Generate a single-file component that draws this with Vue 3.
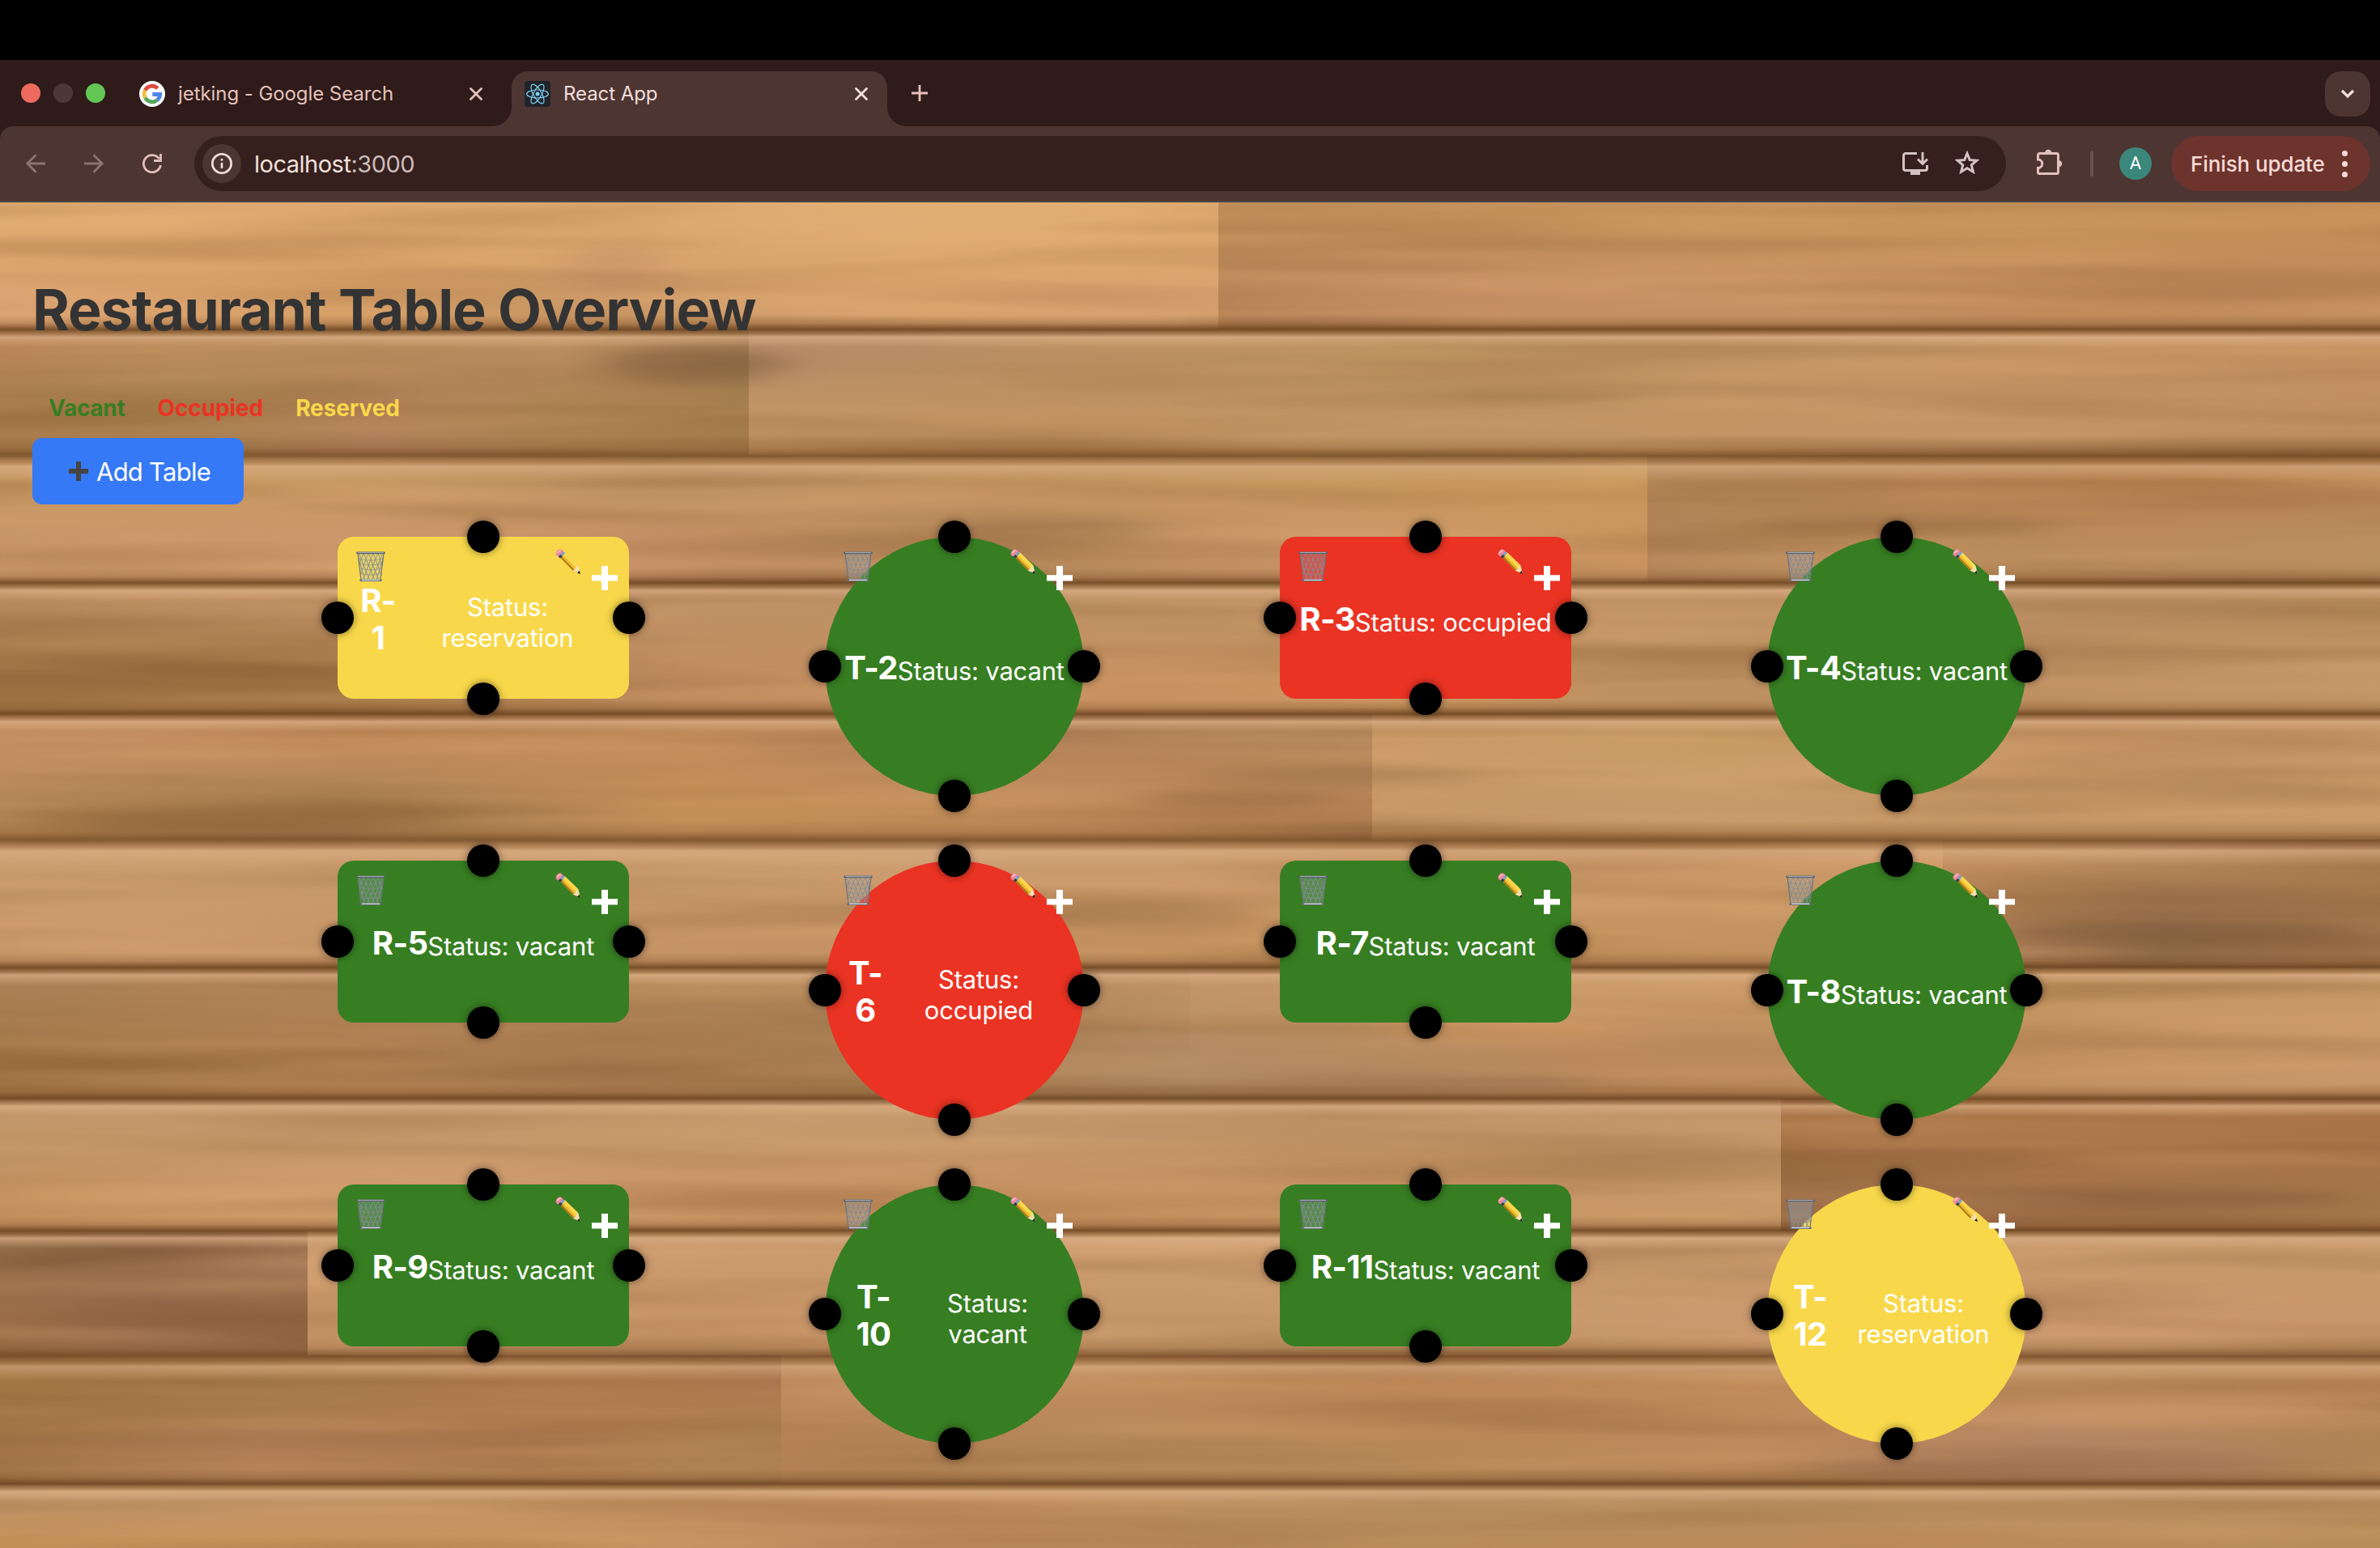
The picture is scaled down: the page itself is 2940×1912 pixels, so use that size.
<script setup>
const tables = [
  { name: 'R-1', status: 'reservation', shape: 'rect', split: [60, 260] },
  { name: 'T-2', status: 'vacant', shape: 'round' },
  { name: 'R-3', status: 'occupied', shape: 'rect' },
  { name: 'T-4', status: 'vacant', shape: 'round' },
  { name: 'R-5', status: 'vacant', shape: 'rect' },
  { name: 'T-6', status: 'occupied', shape: 'round', split: [60, 220] },
  { name: 'R-7', status: 'vacant', shape: 'rect' },
  { name: 'T-8', status: 'vacant', shape: 'round' },
  { name: 'R-9', status: 'vacant', shape: 'rect' },
  { name: 'T-10', status: 'vacant', shape: 'round', split: [82, 200] },
  { name: 'R-11', status: 'vacant', shape: 'rect' },
  { name: 'T-12', status: 'reservation', shape: 'round', split: [66, 214] }
]

// Deck boards: top and bottom edge, then runs of [x, width, colours along the upper half, colours along the lower half]
const boards = [
  { y: 250, b: 407, runs: [[0, 1505, ['#deab70', '#e0ab73', '#dba970', '#e0ae74', '#deaa70'], ['#dca473', '#d8a068', '#cf9c69', '#d6a06c', '#d8a270']], [1505, 1435, ['#c08f5a', '#c9965f', '#c9965f', '#c6935c', '#c28d58'], ['#ba865a', '#c48f63', '#c59161', '#c18b5a', '#bf8a5a']]] },
  { y: 407, b: 562, runs: [[0, 925, ['#b88659', '#bb8b5a', '#b6875a', '#b98b60', '#9b784e'], ['#a97c4c', '#a98050', '#b2805a', '#a98150', '#a98150']], [925, 2015, ['#b58c68', '#bb8e62', '#b9905c', '#c89a68', '#c99865', '#c99665'], ['#c69766', '#c29260', '#c09463', '#c59463', '#c49465', '#bc8c5e']]] },
  { y: 562, b: 720, runs: [[0, 2035, ['#c79862', '#c99a63', '#b88c5c', '#c39360', '#c89960', '#c9995e'], ['#ca986a', '#cb986b', '#c69168', '#b28558', '#c89365', '#c8945f']], [2035, 905, ['#b08456', '#b88555', '#bd8654', '#bb8756'], ['#b3835a', '#b78a59', '#bc8c5f', '#b78c5c']]] },
  { y: 720, b: 882, runs: [[0, 2940, ['#b98a5e', '#bd8e62', '#c19266', '#bd9264', '#c49566', '#c09163', '#b88d62', '#b88c5d'], ['#9d7042', '#a57849', '#bd8b5f', '#c79060', '#c8945f', '#bd9161', '#bc8d60', '#c29464']]] },
  { y: 882, b: 1037, runs: [[0, 1695, ['#c69264', '#c48d5c', '#c48e5c', '#bc8962', '#b98a5e'], ['#b68857', '#a57d50', '#c49059', '#bf8b58', '#b17f54']], [1695, 1245, ['#cc9b68', '#c99c64', '#c99766', '#cd9b6c'], ['#c79866', '#c79a69', '#c69765', '#ca9b67']]] },
  { y: 1037, b: 1195, runs: [[0, 2400, ['#cb9c6f', '#c99b6c', '#cb9c70', '#c99767', '#cf9b6a'], ['#cc9b6c', '#c69567', '#c39160', '#c79660', '#c2905e']], [2400, 540, ['#c2905f', '#b98960', '#ad7f55'], ['#b5835a', '#8f6c49', '#9c7048']]] },
  { y: 1195, b: 1357, runs: [[0, 1470, ['#a97f55', '#b28257', '#b08556', '#ae835a', '#bd9065'], ['#a17443', '#ab7a4e', '#a87850', '#aa8053', '#b28c64']], [1470, 1470, ['#c2946a', '#c89865', '#c49560', '#c99a67'], ['#b28c64', '#b9875c', '#c1905e', '#c99868']]] },
  { y: 1357, b: 1520, runs: [[0, 2200, ['#c3976a', '#c4976b', '#c4986c', '#be9065', '#c09269'], ['#c4925e', '#cf9b6d', '#ca9463', '#c89563', '#c89868']], [2200, 740, ['#a57143', '#ae7a4c', '#a87448'], ['#9a6c46', '#a3714a', '#a6764c']]] },
  { y: 1520, b: 1674, runs: [[0, 380, ['#96704b', '#92694a', '#a27655'], ['#9d6f48', '#96694a', '#926745']], [380, 2560, ['#cf9e70', '#cb9b6e', '#cd9e72', '#c5966a', '#c99a6c'], ['#c9986a', '#c59366', '#c49869', '#cd9a70', '#c8966b']]] },
  { y: 1674, b: 1833, runs: [[0, 965, ['#a0733f', '#a37747', '#af7b4b', '#a8744d'], ['#a5754a', '#b5825a', '#ad7b50', '#b08352']], [965, 1975, ['#bd895b', '#c08c5c', '#b98354', '#be8a58', '#c49363', '#b88555'], ['#b68459', '#b38657', '#b78856', '#be8c5c', '#b38263', '#b08356']]] },
  { y: 1833, b: 1930, runs: [[0, 2940, ['#c2946a', '#c49463', '#c28e60', '#b78d60', '#b88d5f', '#b88c60'], ['#c7945c', '#c8955e', '#bc8a5d', '#b98b58', '#bc8b58', '#b98c58']]] }
]
const gradients = []
const pieces = []
boards.forEach((board, i) => {
  board.runs.forEach(([x, w, upper, lower], j) => {
    const id = `board-${i}-${j}`
    gradients.push({ id: `${id}-u`, stops: upper }, { id: `${id}-l`, stops: lower })
    pieces.push({ id, x, w, y: board.y, h: board.b - board.y })
  })
})
const joints = boards.slice(0, -1).map((b, i) => ({ y: b.b, wide: [1, 4, 8].includes(i) }))
// Darker and lighter figure in the wood: [cx, cy, rx, ry, colour, opacity]
const knots = [
  [1620, 400, 170, 8, '#8d643c', 0.35], [860, 450, 110, 22, '#7d5a38', 0.5], [760, 330, 60, 26, '#b88060', 0.3],
  [1300, 655, 130, 16, '#9a7048', 0.5], [1900, 490, 120, 8, '#947044', 0.35], [2200, 600, 160, 20, '#9a6d42', 0.4],
  [220, 480, 260, 16, '#8f7040', 0.3], [200, 830, 340, 22, '#8d6138', 0.35], [300, 1010, 280, 12, '#8a6038', 0.4],
  [2350, 650, 190, 12, '#8f643c', 0.4], [2700, 1150, 230, 14, '#7c583a', 0.45], [2180, 1110, 70, 20, '#d8a870', 0.3],
  [500, 1320, 420, 12, '#8c6238', 0.3], [1750, 1335, 220, 10, '#8b6548', 0.35], [1850, 1270, 160, 16, '#d79c62', 0.45],
  [2650, 1480, 260, 12, '#7c5230', 0.4], [400, 1780, 420, 12, '#956544', 0.3], [2500, 1810, 300, 10, '#9a6c56', 0.35],
  [130, 1560, 150, 16, '#7c583a', 0.45], [1400, 1135, 150, 24, '#a97b4e', 0.4], [2140, 1300, 120, 20, '#b08256', 0.4],
  [1650, 960, 180, 10, '#a57850', 0.4], [1530, 985, 120, 14, '#936540', 0.5], [2700, 1740, 200, 16, '#d09a68', 0.35]
]
</script>

<template>
  <div class="screen">
    <div class="notch"></div>
    <div class="tabstrip">
      <div class="lights"><span class="light red"></span><span class="light dim"></span><span class="light green"></span></div>
      <div class="tab">
        <svg class="fav" viewBox="0 0 32 32">
          <circle cx="16" cy="16" r="16" fill="#fff" />
          <g fill="none" stroke-width="4.8">
            <path d="M7.2 11.5A9.8 9.8 0 0 1 22.8 9.1" stroke="#db4e3f" />
            <path d="M7.5 20.9A9.8 9.8 0 0 1 7.2 11.5" stroke="#f2bd42" />
            <path d="M22.4 23.5A9.8 9.8 0 0 1 7.4 20.8" stroke="#57a55c" />
            <path d="M16.3 16.5H25.7A9.8 9.8 0 0 1 22.4 23.6" stroke="#4f86ec" />
          </g>
        </svg>
        <span class="tab-text">jetking - Google Search</span>
        <svg class="x" viewBox="0 0 16 16"><path d="M1.5 1.5l13 13M14.5 1.5l-13 13" /></svg>
      </div>
      <div class="tab active">
        <svg class="flare left" viewBox="0 0 24 24"><path d="M24 0v24H0A24 24 0 0 0 24 0z" /></svg>
        <svg class="fav" viewBox="0 0 32 32">
          <rect width="32" height="32" rx="4" fill="#20232a" />
          <g fill="none" stroke="#7fd3f3" stroke-width="1.2">
            <ellipse cx="16" cy="16" rx="13.3" ry="5" />
            <ellipse cx="16" cy="16" rx="13.3" ry="5" transform="rotate(60 16 16)" />
            <ellipse cx="16" cy="16" rx="13.3" ry="5" transform="rotate(120 16 16)" />
          </g>
          <circle cx="16" cy="16" r="2.5" fill="#7fd3f3" />
        </svg>
        <span class="tab-text">React App</span>
        <svg class="x" viewBox="0 0 16 16"><path d="M1.5 1.5l13 13M14.5 1.5l-13 13" /></svg>
        <svg class="flare right" viewBox="0 0 24 24"><path d="M0 0v24h24A24 24 0 0 1 0 0z" /></svg>
      </div>
      <svg class="newtab" viewBox="0 0 20 20"><path d="M10 0v20M0 10h20" /></svg>
      <div class="tabsearch"><svg viewBox="0 0 18 12"><path d="M2 2l7 7 7-7" /></svg></div>
    </div>
    <div class="toolbar">
      <svg class="nav faded" viewBox="0 0 24 24"><path d="M24 12H2M12.5 1.2L1.8 12l10.700 10.8" /></svg>
      <svg class="nav faded" viewBox="0 0 24 24"><path d="M0 12h22M11.5 1.2L22.2 12 11.5 22.8" /></svg>
      <svg class="nav" viewBox="0 0 24 24"><path d="M20.6 6A10.6 10.6 0 1 0 22.4 14M22.5 0v8.500H14" /></svg>
      <div class="omnibox">
        <span class="site"><svg viewBox="0 0 26 26"><circle cx="13" cy="13" r="11.7" /><path d="M13 12v7" /><path d="M13 7v2.6" /></svg></span>
        <span class="url">localhost<em>:3000</em></span>
        <svg class="install" viewBox="0 0 32 28"><path d="M18 1.5H4A2.5 2.5 0 0 0 1.5 4v16A2.5 2.5 0 0 0 4 22.5h24a2.5 2.5 0 0 0 2.5-2.5v-4M25 0v14M19 8.500l6 6 6-6" /><path d="M10 22h12v6H10z" fill="#d3c3c0" stroke="none" /></svg>
        <svg class="star" viewBox="0 0 30 29"><path d="M15 3.5l3.300 8 8.600.7-6.600 5.600 2.100 8.400L15 21.700l-7.400 4.500 2.100-8.400-6.600-5.600 8.600-.7z" /></svg>
      </div>
      <svg class="puzzle" viewBox="0 0 32 32"><path d="M4 5.5H24.5A2 2 0 0 1 26.5 7.5V28.500A2 2 0 0 1 24.5 30.500H3.500A2 2 0 0 1 1.500 28.500V23.500A5.200 5.200 0 0 0 1.500 13V7.500A2 2 0 0 1 3.500 5.500z" /><path d="M10 5a4.200 4.200 0 0 1 8.400 0zM27 14a4.200 4.200 0 0 1 0 8.400z" fill="#e3c1bb" stroke="none" /></svg>
      <span class="divider"></span>
      <span class="avatar">A</span>
      <div class="update"><span>Finish update</span><span class="dots"><u></u><u></u><u></u></span></div>
    </div>

    <main class="page">
      <svg class="deck" viewBox="0 250 2940 1662" preserveAspectRatio="none">
        <defs>
          <linearGradient v-for="g in gradients" :id="g.id" :key="g.id">
            <stop v-for="(c, k) in g.stops" :key="k" :offset="k / (g.stops.length - 1)" :stop-color="c" />
          </linearGradient>
          <linearGradient id="fade" x2="0" y2="1"><stop offset="0.2" stop-color="#000" /><stop offset="0.75" stop-color="#fff" /></linearGradient>
          <linearGradient id="joint" x2="0" y2="1">
            <stop offset="0" stop-color="#6f4520" stop-opacity="0" /><stop offset="0.25" stop-color="#6f4520" stop-opacity="0.25" />
            <stop offset="0.45" stop-color="#6a421f" stop-opacity="0.85" /><stop offset="0.56" stop-color="#8a6038" stop-opacity="0.55" />
            <stop offset="0.68" stop-color="#dcb088" stop-opacity="0.7" /><stop offset="1" stop-color="#dcb088" stop-opacity="0" />
          </linearGradient>
          <mask id="lower" maskContentUnits="objectBoundingBox"><rect width="1" height="1" fill="url(#fade)" /></mask>
          <filter id="grain" x="0" y="0" width="1" height="1" color-interpolation-filters="sRGB">
            <feTurbulence type="fractalNoise" baseFrequency="0.0013 0.024" numOctaves="2" seed="7" />
            <feColorMatrix values="0 0 0 0 0.45  0 0 0 0 0.28  0 0 0 0 0.12  1.2 0 0 0 -0.54" />
          </filter>
          <filter id="shine" x="0" y="0" width="1" height="1" color-interpolation-filters="sRGB">
            <feTurbulence type="fractalNoise" baseFrequency="0.0016 0.03" numOctaves="2" seed="21" />
            <feColorMatrix values="0 0 0 0 0.93  0 0 0 0 0.72  0 0 0 0 0.5  1.2 0 0 0 -0.56" />
          </filter>
          <filter id="soft" x="-30%" y="-150%" width="160%" height="400%"><feGaussianBlur stdDeviation="28 7" /></filter>
        </defs>
        <g v-for="p in pieces" :key="p.id">
          <rect :x="p.x" :y="p.y" :width="p.w" :height="p.h" :fill="`url(#${p.id}-u)`" />
          <rect :x="p.x" :y="p.y" :width="p.w" :height="p.h" :fill="`url(#${p.id}-l)`" mask="url(#lower)" />
        </g>
        <ellipse v-for="(k, i) in knots" :key="i" :cx="k[0]" :cy="k[1]" :rx="k[2]" :ry="k[3]" :fill="k[4]" :opacity="k[5]" filter="url(#soft)" />
        <rect y="250" width="2940" height="1662" filter="url(#grain)" opacity="0.55" />
        <rect y="250" width="2940" height="1662" filter="url(#shine)" opacity="0.45" />
        <rect v-for="j in joints" :key="j.y" x="0" :y="j.wide ? j.y - 24 : j.y - 18" width="2940" :height="j.wide ? 56 : 40" :opacity="j.wide ? 0.85 : 1" fill="url(#joint)" />
      </svg>

      <h1>Restaurant Table Overview</h1>
      <div class="legend"><span class="vacant">Vacant</span><span class="occupied">Occupied</span><span class="reserved">Reserved</span></div>
      <button class="add"><svg viewBox="0 0 24 24"><path d="M12 0v24M0 12h24" /></svg><span>Add Table</span></button>

      <section class="grid">
        <div v-for="t in tables" :key="t.name" class="cell">
          <article class="table" :class="[t.shape, t.status]">
            <div v-if="t.split" class="content">
              <b :style="{ width: t.split[0] + 'px' }">{{ t.name.slice(0, 2) }}<br />{{ t.name.slice(2) }}</b>
              <i :style="{ width: t.split[1] + 'px' }">Status:<br />{{ t.status }}</i>
            </div>
            <div v-else class="content"><b>{{ t.name }}</b><i>Status: {{ t.status }}</i></div>
            <svg class="trash" viewBox="0 0 36 38">
              <path d="M2 2L6 35h24L34 2z" fill="#b4bac0" fill-opacity="0.22" />
              <g fill="none" stroke="#828b93" stroke-width="0.9">
                <path d="M2.5 7L11 36M3 2l14 34M9 2l14 34M15 2l13 34M21 2l10 27M27 2l5 16M33.5 7L25 36M33 2L19 36M27 2L13 36M21 2L8 36M15 2L5 29M9 2L4 16" />
                <path d="M3 9q15 4 30 0M4 15q14 4 28 0M4.5 21q13 4 27 0M5.5 27q12 4 25 0" stroke-width="0.7" />
              </g>
              <path d="M2 3L6 35M34 3L30 35" stroke="#6c747c" stroke-width="1.2" />
              <path d="M1.500 1.900h33" stroke="#5c656f" stroke-width="2.8" stroke-linecap="round" /><path d="M2 1.400h32" stroke="#b3bac1" stroke-width="0.9" />
              <path d="M5.5 35.700h25" stroke="#67707a" stroke-width="2.6" stroke-linecap="round" /><path d="M7 35.400h22" stroke="#dfe3e6" stroke-width="1.1" />
            </svg>
            <svg class="pencil" viewBox="0 0 31 31">
              <path d="M6 10.5L11.5 4 28.3 20.300l-6.300 6.700z" fill="#f0bb2c" /><path d="M9 7L11.500 4 28.300 20.300l-3 3.200z" fill="#fcd750" /><path d="M6 10.5L22 27l1.300-1.500L7.300 9z" fill="#a87a1c" />
              <path d="M28.3 20.300L31 30.500 22 27q.8-2 2.600-2.600.6-2.600 3.700-4.100z" fill="#f6dfae" /><path d="M31 31l-1.200-4.200-2.800 2.700z" fill="#222" />
              <path d="M3.200 8.700L8.700 2.500l3.400 2.400-5.900 6.600z" fill="#7d9fc6" /><path d="M3.200 8.700l2-2.300 3.600 2.600-2.600 2.800z" fill="#39414d" />
              <path d="M.8 7.500C-.5 4.500 3.500-.4 6.500.3l3.200 2.500-6 6.700z" fill="#ec8a9b" /><path d="M2.300 5Q4 2.400 6.500 1.900" stroke="#f9c3cb" stroke-width="1.5" fill="none" />
            </svg>
            <svg class="plus" viewBox="0 0 32 30"><path d="M12 0h8v11.200h12v7.300H20V30h-8V18.500H0v-7.300h12z" fill="#fff" /></svg>
            <span class="chair top"></span><span class="chair right"></span><span class="chair bottom"></span><span class="chair left"></span>
          </article>
        </div>
      </section>
    </main>
  </div>
</template>

<style>
body { margin: 0; background: #000; overflow: hidden; }
</style>

<style scoped>
* { box-sizing: border-box; }
.screen { width: 2940px; height: 1912px; display: flex; flex-direction: column; font-family: Inter, "Noto Sans", sans-serif; overflow: hidden; background: #2f1b19; }
.notch { height: 74px; background: #000; flex: none; }
.tabstrip { height: 82px; flex: none; background: #2f1b19; display: flex; padding-top: 14px; position: relative; }
.lights { display: flex; gap: 16px; padding: 15px 0 0 26px; width: 172px; }
.light { width: 24px; height: 24px; border-radius: 50%; }
.red { background: #ed6a5f; }
.dim { background: #4d3836; }
.green { background: #62c655; }
.tab { display: flex; align-items: center; height: 56px; width: 460px; color: #e3c1bb; font-size: 24px; }
.tab .fav { width: 32px; height: 32px; margin-right: 16px; }
.tab-text { flex: 1; white-space: nowrap; letter-spacing: -0.07px; padding-bottom: 1px; }
.tab .x { width: 16px; height: 16px; margin-right: 36px; fill: none; stroke: currentColor; stroke-width: 2.8; stroke-linecap: round; }
.tab.active { position: relative; height: 68px; width: 464px; background: #4d3532; border-radius: 20px 20px 0 0; padding: 0 0 12px 16px; color: #f2dedb; }
.tab.active .x { margin-right: 24px; }
.flare { position: absolute; bottom: 0; width: 24px; height: 24px; fill: #4d3532; }
.flare.left { left: -24px; }
.flare.right { right: -24px; }
.newtab { width: 20px; height: 20px; margin: 17px 0 0 30px; stroke: #e3c1bb; stroke-width: 2.8; }
.tabsearch { margin: 0 12px 0 auto; width: 56px; height: 56px; border-radius: 20px; background: #4d3532; display: flex; align-items: center; justify-content: center; }
.tabsearch svg { width: 18px; height: 12px; fill: none; stroke: #f2dedb; stroke-width: 3.2; }
.toolbar { height: 94px; flex: none; display: flex; align-items: center; background: #4d3532; border-bottom: 2px solid #4a4546; border-radius: 16px 16px 0 0; padding: 0 12px 0 32px; }
.nav { width: 24px; height: 24px; margin-right: 48px; fill: none; stroke: #e3c1bb; stroke-width: 2.8; }
.nav.faded { stroke: #8c736f; }
.nav + .nav + .nav { margin-right: 40px; }
.omnibox { width: 2238px; height: 68px; border-radius: 34px; background: #35201e; display: flex; align-items: center; padding: 0 33px 0 10px; }
.site { width: 48px; height: 48px; border-radius: 50%; background: #4d3532; display: flex; align-items: center; justify-content: center; margin-right: 16px; }
.site svg { width: 26px; height: 26px; fill: none; stroke: #f4e0dc; stroke-width: 2.6; }
.url { flex: 1; font-size: 29px; letter-spacing: -0.5px; color: #f4e0dc; }
.url em { font-style: normal; color: #cdbdba; }
.install { width: 32px; height: 28px; fill: none; stroke: #d3c3c0; stroke-width: 3; margin-right: 33px; }
.star { width: 30px; height: 29px; fill: none; stroke: #d3c3c0; stroke-width: 3; margin-top: -3px; }
.puzzle { width: 32px; height: 32px; margin: -4px 34px 0 38px; fill: none; stroke: #e3c1bb; stroke-width: 3; }
.divider { width: 4px; height: 32px; border-radius: 2px; background: #6b504b; }
.avatar { width: 40px; height: 40px; margin: 0 24px 0 32px; border-radius: 50%; background: #3b877b; color: #fff; font: 22px/40px Roboto, sans-serif; text-align: center; }
.update { width: 246px; height: 68px; border-radius: 34px; background: #6d332d; color: #fadbd5; font-size: 26px; font-weight: 500; letter-spacing: -0.1px; display: flex; align-items: center; padding-left: 24px; white-space: nowrap; }
.dots { display: flex; flex-direction: column; gap: 6px; margin: 0 28px 0 auto; }
.dots u { width: 7px; height: 7px; border-radius: 50%; background: #fadbd5; }
.page { position: relative; flex: 1; padding: 93px 40px 0; }
.deck { position: absolute; left: 0; top: 0; width: 2940px; height: 1662px; }
h1, .legend, .add, .grid { position: relative; }
h1 { margin: 0; height: 80px; line-height: 80px; font-size: 70px; font-weight: 700; letter-spacing: -1.1px; color: #333; white-space: nowrap; }
.legend { display: flex; gap: 40px; margin-top: 63px; padding-left: 20px; height: 36px; line-height: 36px; font-size: 28px; font-weight: 700; letter-spacing: -0.1px; }
.legend .vacant { color: #377e22; letter-spacing: -0.3px; }
.legend .occupied { color: #ea3323; }
.legend .reserved { color: #f8d84a; }
.add { display: flex; align-items: center; width: 261px; height: 82px; margin: 19px 0 0; padding: 0 0 0 45px; border: 0; border-radius: 12px; background: #3579f6; color: #fff; font: 31px Inter, sans-serif; letter-spacing: -0.75px; white-space: nowrap; }
.add svg { width: 24px; height: 24px; margin-right: 10px; stroke: #444; stroke-width: 6; }
.grid { display: grid; grid-template-columns: repeat(4, 582px); grid-auto-rows: 400px; justify-content: center; margin-top: 40px; }
.cell { display: flex; justify-content: center; align-items: flex-start; }
.table { position: relative; display: flex; align-items: center; justify-content: center; color: #fff; }
.table.rect { width: 360px; height: 200px; border-radius: 20px; }
.table.round { width: 320px; height: 320px; border-radius: 50%; }
.table.vacant { background: #377e22; }
.table.occupied { background: #ea3323; }
.table.reservation { background: #f8d84a; }
.content { display: flex; align-items: center; flex: none; text-align: center; white-space: nowrap; }
.content b { font-size: 40px; line-height: 46px; padding-top: 3px; letter-spacing: -0.7px; }
.content i { font-style: normal; font-size: 31px; line-height: 38px; padding-top: 11px; letter-spacing: -0.2px; }
.trash, .pencil, .plus, .chair { position: absolute; }
.trash { left: 23px; top: 18px; width: 36px; height: 38px; }
.pencil { right: 60px; top: 15px; width: 31px; height: 31px; }
.plus { right: 14px; top: 36px; width: 32px; height: 30px; }
.chair { width: 40px; height: 40px; border-radius: 50%; background: #000; box-shadow: 0 0 10px rgba(0, 0, 0, 0.5); }
.chair.top { left: calc(50% - 20px); top: -20px; }
.chair.bottom { left: calc(50% - 20px); bottom: -20px; }
.chair.left { left: -20px; top: calc(50% - 20px); }
.chair.right { right: -20px; top: calc(50% - 20px); }
</style>
